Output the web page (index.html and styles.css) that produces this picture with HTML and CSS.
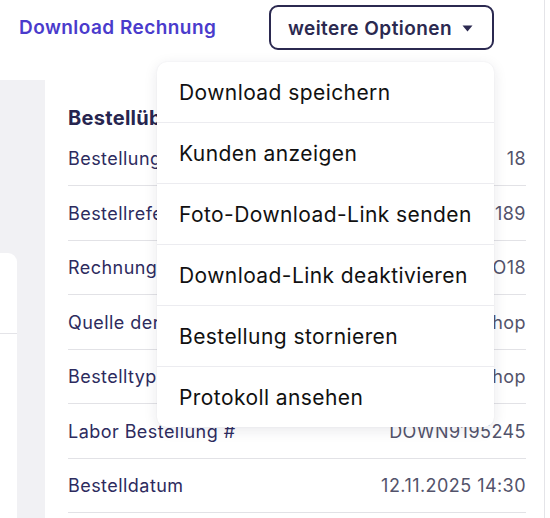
FILE: index.html
```html
<!DOCTYPE html>
<html lang="de">
<head>
<meta charset="utf-8">
<link rel="stylesheet" href="styles.css">
</head>
<body>
<div class="page">
  <header class="topbar">
    <a class="invoice-link">Download Rechnung</a>
    <div class="options">
      <button class="options-btn">weitere Optionen
        <svg class="caret" width="11" height="7" viewBox="0 0 11 7"><path d="M0.5 0.5 H10.5 L5.5 6.5 Z" fill="#2b2950"/></svg>
      </button>
      <ul class="menu">
        <li>Download speichern</li>
        <li>Kunden anzeigen</li>
        <li>Foto-Download-Link senden</li>
        <li>Download-Link deaktivieren</li>
        <li>Bestellung stornieren</li>
        <li>Protokoll ansehen</li>
      </ul>
    </div>
  </header>
  <div class="content">
    <aside class="sidebar">
      <div class="side-card"><div class="side-line"></div></div>
    </aside>
    <main class="main">
      <h2 class="heading">Bestellübersicht</h2>
      <div class="row"><span class="label">Bestellung #</span><span class="value">18</span></div>
      <div class="row"><span class="label">Bestellreferenz</span><span class="value">189</span></div>
      <div class="row"><span class="label">Rechnung #</span><span class="value">O18</span></div>
      <div class="row"><span class="label">Quelle der Bestellung</span><span class="value">Shop</span></div>
      <div class="row"><span class="label">Bestelltyp</span><span class="value">Shop</span></div>
      <div class="row"><span class="label">Labor Bestellung #</span><span class="value">DOWN9195245</span></div>
      <div class="row"><span class="label">Bestelldatum</span><span class="value">12.11.2025 14:30</span></div>
    </main>
  </div>
</div>
</body>
</html>
```

FILE: styles.css
```css
* { box-sizing: border-box; }
html, body { margin: 0; padding: 0; background: #fff; }
body {
  width: 550px;
  height: 518px;
  overflow: hidden;
  font-family: Inter, "Noto Sans", sans-serif;
}
.page {
  width: 545px;
  height: 518px;
  border-right: 1px solid #e4e4e8;
  display: flex;
  flex-direction: column;
}
.topbar {
  height: 80px;
  flex: none;
  display: flex;
  align-items: flex-start;
  padding: 5px 0 0 19px;
  position: relative;
  z-index: 2;
}
.invoice-link {
  width: 198px;
  white-space: nowrap;
  font-size: 19px;
  font-weight: 600;
  letter-spacing: 0.45px;
  color: #4a3bcc;
  margin-top: 12px;
  line-height: 22px;
}
.options {
  position: relative;
  margin-left: 52px;
}
.options-btn {
  height: 45px;
  width: 225px;
  border: 2px solid #2b2950;
  border-radius: 9px;
  background: #fff;
  font-family: inherit;
  font-size: 19px;
  font-weight: 600;
  letter-spacing: 0.45px;
  color: #2b2950;
  display: flex;
  align-items: center;
  justify-content: center;
  gap: 10px;
  padding: 1px 2px 0 0;
}
.caret { margin-top: 1px; }
.menu {
  position: absolute;
  top: 57px;
  right: 0;
  width: 337px;
  margin: 0;
  padding: 0;
  list-style: none;
  background: #fff;
  border-radius: 10px;
  box-shadow: 0 3px 14px rgba(30, 30, 60, 0.10), 0 0 2px rgba(30, 30, 60, 0.06);
}
.menu li {
  height: 61px;
  border-top: 1px solid #ececf0;
  padding-left: 22px;
  display: flex;
  align-items: center;
  font-size: 21px;
  letter-spacing: 0.42px;
  color: #111;
  white-space: nowrap;
}
.menu li:first-child { border-top: none; height: 60px; }
.content {
  flex: 1;
  display: flex;
  min-height: 0;
}
.sidebar {
  width: 45px;
  flex: none;
  background: #f1f1f4;
  padding-top: 173px;
  display: flex;
  flex-direction: column;
}
.side-card {
  width: 17px;
  flex: 1;
  background: #fff;
  border-radius: 0 9px 0 0;
  padding-top: 80px;
}
.side-line { height: 1px; background: #e4e4e8; }
.main {
  flex: 1;
  padding: 26px 18px 0 23px;
}
.heading {
  margin: 0;
  font-size: 20px;
  font-weight: 700;
  letter-spacing: 0.3px;
  line-height: 24px;
  color: #27254f;
}
.row {
  height: 54.5px;
  display: flex;
  align-items: center;
  justify-content: space-between;
  border-bottom: 1px solid #e2e2e6;
  font-size: 18px;
  letter-spacing: 0.45px;
  padding-top: 1px;
  white-space: nowrap;
}
.row:first-of-type { height: 56px; }
.label { color: #2d2b5e; }
.value { color: #53536b; }
```
